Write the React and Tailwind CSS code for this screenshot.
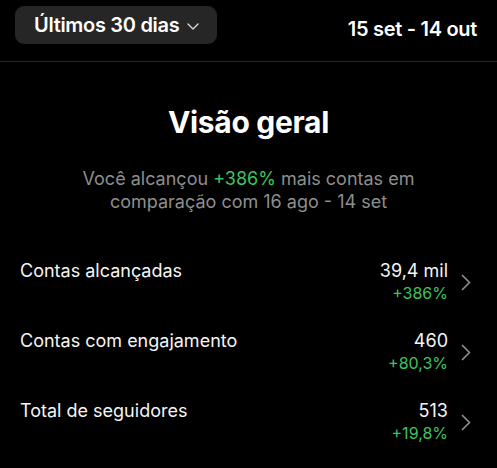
const stats = [
  { label: 'Contas alcançadas', value: '39,4 mil', delta: '+386%' },
  { label: 'Contas com engajamento', value: '460', delta: '+80,3%' },
  { label: 'Total de seguidores', value: '513', delta: '+19,8%' },
];

const SmallChevronDown = () => (
  <svg width="12" height="7" viewBox="0 0 12 7" fill="none" className="mt-[2px]">
    <polyline points="1,1 6,6 11,1" stroke="#d8d8d8" strokeWidth="1.4" strokeLinecap="round" strokeLinejoin="round" />
  </svg>
);

const RowChevron = () => (
  <svg width="10" height="17" viewBox="0 0 10 17" fill="none">
    <polyline points="1.5,1.5 8.5,8.5 1.5,15.5" stroke="#8e8e8e" strokeWidth="1.7" strokeLinecap="round" strokeLinejoin="round" />
  </svg>
);

const App = () => {
  return (
    <div className="h-[468px] w-[497px] overflow-hidden bg-black text-white" style={{ fontFamily: 'Inter, "Noto Sans", sans-serif' }}>
      <header className="flex h-[62px] items-start justify-between border-b border-[#262626] pl-[15px] pr-[20px] pt-[6px]">
        <button className="flex h-[38px] w-[202px] items-center gap-[8px] rounded-[9px] bg-[#262626] pl-[19px] text-[20px] font-semibold tracking-[-0.3px]">
          Últimos 30 dias
          <SmallChevronDown />
        </button>
        <span className="mt-[8px] text-[20px] font-semibold tracking-[-0.3px]">15 set - 14 out</span>
      </header>

      <section className="flex flex-col items-center pt-[40px]">
        <h1 className="text-[30px] font-bold leading-[40px] tracking-[-0.3px]">Visão geral</h1>
        <p className="mt-[25px] w-[370px] text-center text-[18px] leading-[23px] text-[#8e8e8e]">
          Você alcançou <span className="text-[#3ec45f]">+386%</span> mais contas em comparação com 16 ago - 14 set
        </p>
      </section>

      <ul className="mt-[47px] flex flex-col gap-[26px] pl-[20px] pr-[26px]">
        {stats.map((item) => (
          <li key={item.label} className="flex items-center justify-between">
            <span className="self-start text-[18px] leading-[22px] text-[#f5f5f5]">{item.label}</span>
            <div className="flex items-center gap-[13px]">
              <div className="flex flex-col items-end">
                <span className="text-[18px] leading-[22px] text-[#f5f5f5]">{item.value}</span>
                <span className="text-[16px] leading-[22px] text-[#3ec45f]">{item.delta}</span>
              </div>
              <RowChevron />
            </div>
          </li>
        ))}
      </ul>
    </div>
  );
};

export default App;
